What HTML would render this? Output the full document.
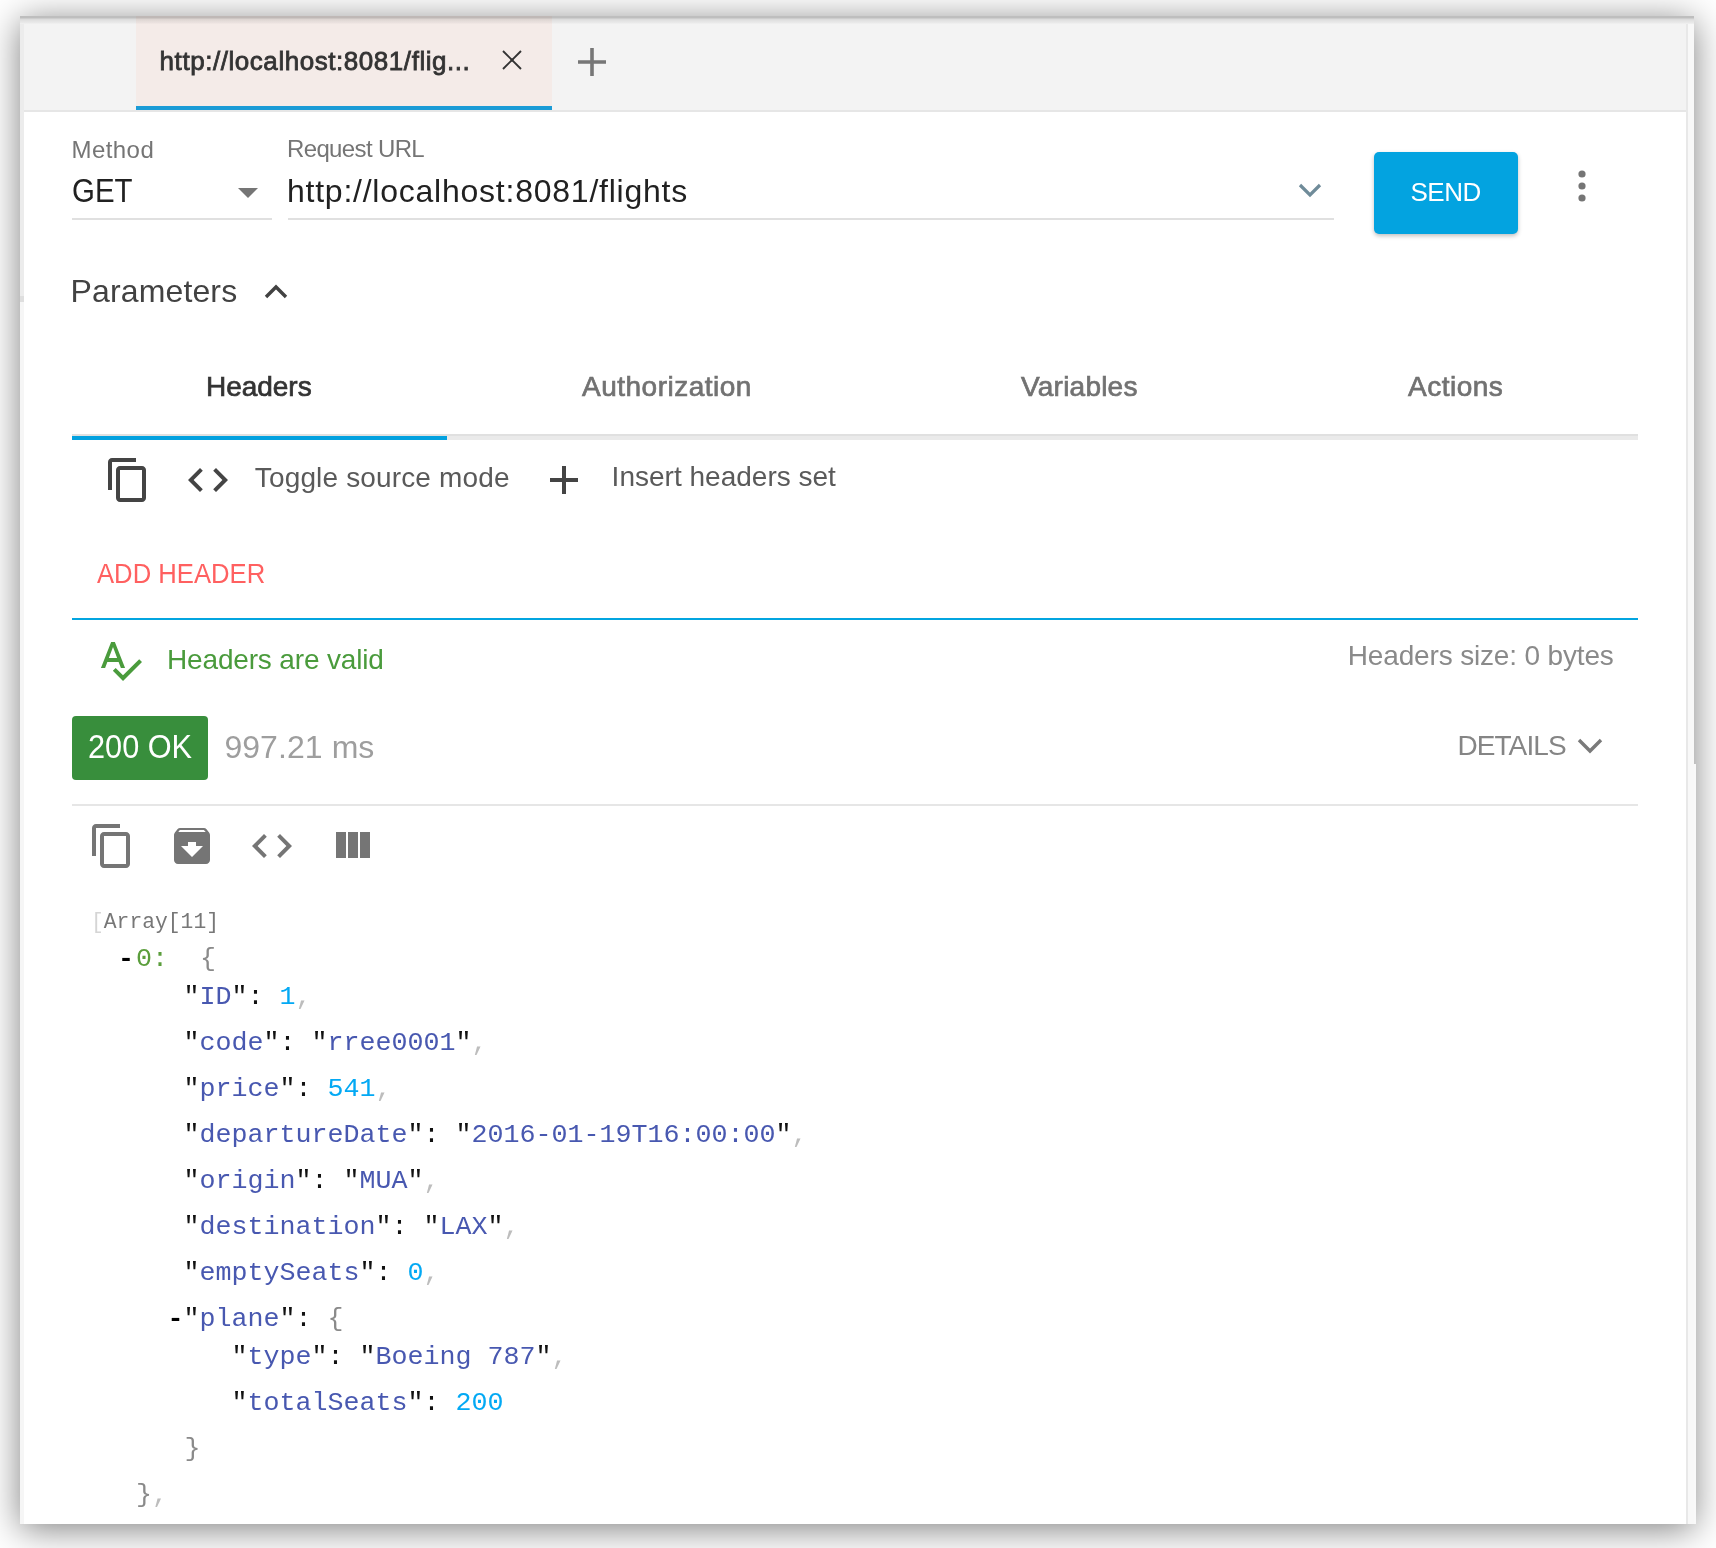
<!DOCTYPE html>
<html><head><meta charset="utf-8">
<style>
html,body{margin:0;padding:0;}
body{width:1716px;height:1548px;overflow:hidden;background:#ffffff;position:relative;font-family:"Liberation Sans",sans-serif;}
.a{position:absolute;white-space:nowrap;line-height:1;}
.win{position:absolute;left:20px;top:16px;width:1674px;height:1508px;background:#fff;box-shadow:0 5px 34px rgba(0,0,0,0.5);overflow:hidden;}
.mono{font-family:"Liberation Mono",monospace;}
.mono .p{color:#111}.mono .b{color:#8a8a8a}.mono .d{color:#000;font-weight:bold}.mono .k{color:#4858b0}.mono .s{color:#4858b0}.mono .n{color:#03a9f4}.mono .c{color:#bdbdbd}.mono .g{color:#5b9e3c}.mono .ab{color:#d5d5d5}.mono .ar{color:#777}
svg{position:absolute;display:block;}
</style></head>
<body>
<div class="win">
  <!-- tab bar -->
  <div class="a" style="left:0;top:0;width:1675px;height:94px;background:#f3f3f3;"></div>
  <div class="a" style="left:0;top:94px;width:1666px;height:2px;background:#e6e6e6;"></div>
  <div class="a" style="left:116px;top:0;width:416px;height:94px;background:#f4ebe8;"></div>
  <div class="a" style="left:116px;top:90px;width:416px;height:4px;background:#1a9bd6;"></div>
  <div class="a" style="left:0;top:0;width:1675px;height:8px;background:linear-gradient(#c8c8c8 0px,#c8c8c8 2px,#d7d7d7 2.5px,#e7e7e7 3.5px,#efefef 5px,#f6f6f6 7px,#ffffff 8px);mix-blend-mode:multiply;"></div>
  <!-- side strips -->
  <div class="a" style="left:0;top:8px;width:4px;height:272px;background:#ececec;"></div><div class="a" style="left:0;top:280px;width:4px;height:6px;background:#dedede;"></div><div class="a" style="left:0;top:286px;width:4px;height:1222px;background:#f6f6f6;"></div>
  <div class="a" style="left:1666px;top:8px;width:2px;height:1500px;background:#e8e8e8;"></div>
  <div class="a" style="left:1668px;top:8px;width:7px;height:1500px;background:#f8f8f8;"></div>
</div>
<div class="a" style="left:1694px;top:764px;width:2px;height:760px;background:#f9f9f9;"></div>

<div id="t_tab" class="a" style="left:159.6px;top:47.5px;font-size:26px;color:#333;-webkit-text-stroke:0.8px #333;letter-spacing:0.55px;">http://localhost:8081/flig...</div>
<svg id="i_close" style="left:500px;top:48px" width="24" height="24" viewBox="0 0 24 24"><path d="M3 3L21 21M21 3L3 21" stroke="#333" stroke-width="1.9" fill="none"/><rect x="10.6" y="10.6" width="2.8" height="2.8" fill="#333"/></svg>
<svg id="i_plus" style="left:572px;top:42px" width="40" height="40" viewBox="0 0 40 40"><path d="M20 6V34M6 20H34" stroke="#767676" stroke-width="3.6" fill="none"/></svg>

<div id="t_method" class="a" style="left:71.5px;top:137.7px;font-size:24px;color:#757575;letter-spacing:0.44px;">Method</div>
<div id="t_get" class="a" style="left:71.7px;top:174.0px;font-size:33px;color:#212121;letter-spacing:0px;transform:scaleX(0.892);transform-origin:0 0;">GET</div>
<svg id="i_tri" style="left:238px;top:188px" width="20" height="10" viewBox="0 0 20 10"><path d="M0 0H20L10 10Z" fill="#757575"/></svg>
<div class="a" style="left:72px;top:218px;width:200px;height:2px;background:#e0e0e0;"></div>
<div id="t_requrl" class="a" style="left:287.0px;top:137.4px;font-size:24px;color:#757575;letter-spacing:-0.64px;">Request URL</div>
<div id="t_url" class="a" style="left:287.0px;top:174.7px;font-size:32px;color:#212121;letter-spacing:0.76px;">http://localhost:8081/flights</div>
<div class="a" style="left:288px;top:218px;width:1046px;height:2px;background:#e0e0e0;"></div>
<svg id="i_chev" style="left:1298px;top:183px" width="24" height="15" viewBox="0 0 24 15"><path d="M2 2L12 12L22 2" stroke="#6f8b99" stroke-width="3.2" fill="none"/></svg>
<div class="a" style="left:1374px;top:152px;width:144px;height:82px;background:#03a3e0;border-radius:5px;box-shadow:0 2px 4px rgba(0,0,0,0.25);"></div>
<div id="t_send" class="a" style="left:1410.5px;top:179.0px;font-size:26px;color:#fff;letter-spacing:-0.50px;">SEND</div>
<svg id="i_dots" style="left:1576px;top:168px" width="12" height="36" viewBox="0 0 12 36"><circle cx="6" cy="6" r="3.6" fill="#757575"/><circle cx="6" cy="18" r="3.6" fill="#757575"/><circle cx="6" cy="30" r="3.6" fill="#757575"/></svg>

<div id="t_params" class="a" style="left:70.6px;top:274.6px;font-size:32px;color:#424242;letter-spacing:0.13px;">Parameters</div>
<svg id="i_chevup" style="left:264px;top:283px" width="24" height="16" viewBox="0 0 24 16"><path d="M2 14L12 4L22 14" stroke="#424242" stroke-width="3.4" fill="none"/></svg>

<div id="t_h1" class="a" style="left:206.0px;top:372.9px;font-size:28px;color:#333;-webkit-text-stroke:0.7px #333;letter-spacing:-0.03px;">Headers</div>
<div id="t_h2" class="a" style="left:582.0px;top:372.9px;font-size:28px;color:#727272;-webkit-text-stroke:0.7px #727272;letter-spacing:0.50px;">Authorization</div>
<div id="t_h3" class="a" style="left:1021.0px;top:372.9px;font-size:28px;color:#727272;-webkit-text-stroke:0.7px #727272;letter-spacing:0.22px;">Variables</div>
<div id="t_h4" class="a" style="left:1408.0px;top:372.9px;font-size:28px;color:#727272;-webkit-text-stroke:0.7px #727272;letter-spacing:0.50px;">Actions</div>
<div class="a" style="left:72px;top:434px;width:1566px;height:2px;background:#e0e0e0;"></div>
<div class="a" style="left:72px;top:436px;width:1566px;height:4px;background:#eaeaea;"></div>
<div class="a" style="left:72px;top:436px;width:375px;height:4px;background:#03a1df;"></div>

<svg id="i_copy1" style="left:104px;top:456px" width="48" height="48" viewBox="0 0 24 24"><path fill="#444" d="M16 1H4c-1.1 0-2 .9-2 2v14h2V3h12V1zm3 4H8c-1.1 0-2 .9-2 2v14c0 1.1.9 2 2 2h11c1.1 0 2-.9 2-2V7c0-1.1-.9-2-2-2zm0 16H8V7h11v14z"/></svg>
<svg id="i_code1" style="left:184px;top:456px" width="48" height="48" viewBox="0 0 24 24"><path fill="#444" d="M9.4 16.6L4.8 12l4.6-4.6L8 6l-6 6 6 6 1.4-1.4zm5.2 0l4.6-4.6-4.6-4.6L16 6l6 6-6 6-1.4-1.4z"/></svg>
<div id="t_toggle" class="a" style="left:254.8px;top:464.3px;font-size:28px;color:#5a5a5a;letter-spacing:0.15px;">Toggle source mode</div>
<svg id="i_plus1" style="left:540px;top:456px" width="48" height="48" viewBox="0 0 24 24"><path fill="#444" d="M19 13h-6v6h-2v-6H5v-2h6V5h2v6h6v2z"/></svg>
<div id="t_insert" class="a" style="left:611.6px;top:463.3px;font-size:28px;color:#5a5a5a;letter-spacing:0.01px;">Insert headers set</div>

<div id="t_add" class="a" style="left:96.7px;top:560.3px;font-size:28px;color:#ff6060;letter-spacing:0px;transform:scaleX(0.916);transform-origin:0 0;">ADD HEADER</div>
<div class="a" style="left:72px;top:618px;width:1566px;height:2px;background:#03a5e0;"></div>

<svg id="i_spell" style="left:96px;top:636px" width="48" height="48" viewBox="0 0 24 24"><path fill="#4a9b3c" d="M12.45 16h2.09L9.43 3H7.57L2.46 16h2.09l1.12-3h5.64l1.14 3zm-6.02-5L8.5 5.48 10.57 11H6.43zm15.16.59l-8.09 8.09L9.83 16l-1.41 1.41 5.09 5.09L23 13l-1.41-1.41z"/></svg>
<div id="t_valid" class="a" style="left:167.0px;top:645.9px;font-size:28px;color:#4a9b3c;letter-spacing:-0.16px;">Headers are valid</div>
<div id="t_hsize" class="a" style="left:1347.8px;top:642.0px;font-size:28px;color:#8a8a8a;letter-spacing:-0.16px;">Headers size: 0 bytes</div>

<div class="a" style="left:72px;top:716px;width:136px;height:64px;background:#388e3c;border-radius:4px;"></div>
<div id="t_200" class="a" style="left:88.3px;top:730.0px;font-size:33px;color:#fff;letter-spacing:0px;transform:scaleX(0.93);transform-origin:0 0;">200 OK</div>
<div id="t_ms" class="a" style="left:224.4px;top:730.8px;font-size:32px;color:#9e9e9e;letter-spacing:0.07px;">997.21 ms</div>
<div id="t_details" class="a" style="left:1457.4px;top:732.1px;font-size:28px;color:#858585;letter-spacing:-0.90px;">DETAILS</div>
<svg id="i_chevd" style="left:1576px;top:736px" width="28" height="20" viewBox="0 0 28 20"><path d="M3 4L14 15L25 4" stroke="#7a7a7a" stroke-width="3.4" fill="none"/></svg>
<div class="a" style="left:72px;top:804px;width:1566px;height:2px;background:#e6e6e6;"></div>

<svg id="i_copy2" style="left:88px;top:822px" width="48" height="48" viewBox="0 0 24 24"><path fill="#757575" d="M16 1H4c-1.1 0-2 .9-2 2v14h2V3h12V1zm3 4H8c-1.1 0-2 .9-2 2v14c0 1.1.9 2 2 2h11c1.1 0 2-.9 2-2V7c0-1.1-.9-2-2-2zm0 16H8V7h11v14z"/></svg>
<svg id="i_arch" style="left:168px;top:822px" width="48" height="48" viewBox="0 0 24 24"><path fill="#757575" d="M20.54 5.23l-1.39-1.68C18.88 3.21 18.47 3 18 3H6c-.47 0-.88.21-1.16.55L3.46 5.23C3.17 5.57 3 6.02 3 6.5V19c0 1.1.9 2 2 2h14c1.1 0 2-.9 2-2V6.5c0-.48-.17-.93-.46-1.27zM12 17.5L6.5 12H10v-2h4v2h3.5L12 17.5zM5.12 5l.81-1h12l.94 1H5.12z"/></svg>
<svg id="i_code2" style="left:248px;top:822px" width="48" height="48" viewBox="0 0 24 24"><path fill="#757575" d="M9.4 16.6L4.8 12l4.6-4.6L8 6l-6 6 6 6 1.4-1.4zm5.2 0l4.6-4.6-4.6-4.6L16 6l6 6-6 6-1.4-1.4z"/></svg>
<svg id="i_cols" style="left:328px;top:822px" width="48" height="48" viewBox="0 0 24 24"><path fill="#757575" d="M10 18h5V5h-5v13zm-6 0h5V5H4v13zM16 5v13h5V5h-5z"/></svg>

<!-- JSON -->
<div id="t_arr" class="a mono" style="left:91px;top:911.66px;font-size:21.3333px;"><span class="ab">[</span><span class="ar">Array[11]</span></div>
<div id="t_zero" class="a mono" style="left:118px;top:945.57px;font-size:26.6667px;"><span class="d">-</span><span class="g" style="margin-left:2px">0:</span><span class="b">&nbsp;&nbsp;{</span></div>
<div id="t_id" class="a mono" style="left:183.5px;top:983.57px;font-size:26.6667px;"><span class="p">"</span><span class="k">ID</span><span class="p">":&nbsp;</span><span class="n">1</span><span class="c">,</span></div>
<div class="a mono" style="left:183.5px;top:1029.57px;font-size:26.6667px;"><span class="p">"</span><span class="k">code</span><span class="p">":&nbsp;"</span><span class="s">rree0001</span><span class="p">"</span><span class="c">,</span></div>
<div class="a mono" style="left:183.5px;top:1075.57px;font-size:26.6667px;"><span class="p">"</span><span class="k">price</span><span class="p">":&nbsp;</span><span class="n">541</span><span class="c">,</span></div>
<div id="t_dep" class="a mono" style="left:183.5px;top:1121.57px;font-size:26.6667px;"><span class="p">"</span><span class="k">departureDate</span><span class="p">":&nbsp;"</span><span class="s">2016-01-19T16:00:00</span><span class="p">"</span><span class="c">,</span></div>
<div class="a mono" style="left:183.5px;top:1167.57px;font-size:26.6667px;"><span class="p">"</span><span class="k">origin</span><span class="p">":&nbsp;"</span><span class="s">MUA</span><span class="p">"</span><span class="c">,</span></div>
<div class="a mono" style="left:183.5px;top:1213.57px;font-size:26.6667px;"><span class="p">"</span><span class="k">destination</span><span class="p">":&nbsp;"</span><span class="s">LAX</span><span class="p">"</span><span class="c">,</span></div>
<div class="a mono" style="left:183.5px;top:1259.57px;font-size:26.6667px;"><span class="p">"</span><span class="k">emptySeats</span><span class="p">":&nbsp;</span><span class="n">0</span><span class="c">,</span></div>
<div id="t_plane" class="a mono" style="left:167.5px;top:1305.57px;font-size:26.6667px;"><span class="d">-</span><span class="p">"</span><span class="k">plane</span><span class="p">":&nbsp;</span><span class="b">{</span></div>
<div id="t_type" class="a mono" style="left:231.5px;top:1343.57px;font-size:26.6667px;"><span class="p">"</span><span class="k">type</span><span class="p">":&nbsp;"</span><span class="s">Boeing&nbsp;787</span><span class="p">"</span><span class="c">,</span></div>
<div class="a mono" style="left:231.5px;top:1389.57px;font-size:26.6667px;"><span class="p">"</span><span class="k">totalSeats</span><span class="p">":&nbsp;</span><span class="n">200</span></div>
<div id="t_rb1" class="a mono" style="left:184.5px;top:1435.57px;font-size:26.6667px;"><span class="b">}</span></div>
<div id="t_rb2" class="a mono" style="left:136px;top:1481.57px;font-size:26.6667px;"><span class="b">}</span><span class="c">,</span></div>
</body></html>
